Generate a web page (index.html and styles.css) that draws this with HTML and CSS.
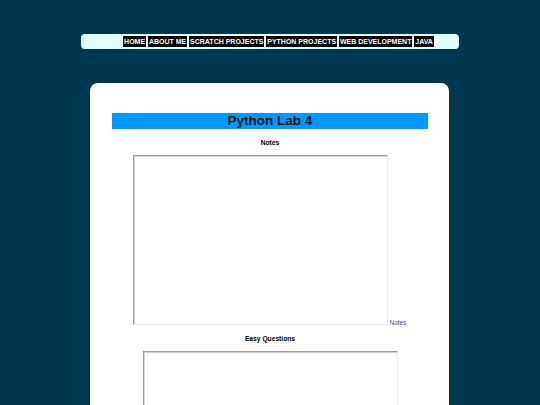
FILE: index.html
```html
<!DOCTYPE html>
<html>
<head>
<meta charset="utf-8">
<title>Python Lab 4</title>
<link rel="stylesheet" href="styles.css">
</head>
<body>
<nav class="nav">
  <ul class="nav-list">
    <li><a href="#">HOME</a></li>
    <li><a href="#">ABOUT ME</a></li>
    <li><a href="#">SCRATCH PROJECTS</a></li>
    <li><a href="#">PYTHON PROJECTS</a></li>
    <li><a href="#">WEB DEVELOPMENT</a></li>
    <li><a href="#">JAVA</a></li>
  </ul>
</nav>
<main class="card">
  <h1 class="title">Python Lab 4</h1>
  <h2 class="label">Notes</h2>
  <p class="frame-row"><span class="frame frame-notes"></span><a class="frame-link" href="#">Notes</a></p>
  <h2 class="label label-2">Easy Questions</h2>
  <p class="frame-row"><span class="frame frame-easy"></span></p>
</main>
</body>
</html>
```
FILE: styles.css
```css
html, body {
  margin: 0;
  padding: 0;
}
body {
  background: #00364f;
  font-family: "Liberation Sans", Arial, sans-serif;
  color: #000;
  padding-top: 34px;
  height: 405px;
  overflow: hidden;
}
.nav {
  width: 378px;
  margin: 0 auto;
  background: #e0ffff;
  border-radius: 4px;
  padding: 2px 0 2px 17px;
  box-sizing: border-box;
  height: 15px;
}
.nav-list {
  list-style: none;
  margin: 0;
  padding: 0;
  display: flex;
  justify-content: center;
  gap: 1.8px;
}
.nav-list a {
  display: block;
  background: #000;
  color: #fff;
  text-decoration: none;
  font-weight: bold;
  font-size: 7px;
  line-height: 11px;
  padding: 0 1px;
}
.card {
  width: 359px;
  margin: 34px 0 0 90px;
  background: #fff;
  border-radius: 8px;
  padding: 30px 21px 60px 22px;
  box-sizing: border-box;
  min-height: 400px;
}
.title {
  margin: 0;
  background: #0099ff;
  color: #111;
  font-size: 13.5px;
  line-height: 16px;
  height: 16px;
  text-align: center;
  font-weight: bold;
}
.label {
  margin: 10px 0 8px;
  font-size: 6.7px;
  line-height: 8px;
  text-align: center;
  font-weight: bold;
}
.label-2 {
  margin-top: 9px;
  margin-bottom: 8px;
}
.frame-row {
  margin: 0;
  text-align: center;
  font-size: 6.5px;
  line-height: 6px;
}
.frame {
  display: inline-block;
  box-sizing: border-box;
  width: 255px;
  height: 170px;
  border-top: 1px solid #9c9c9c;
  border-left: 1px solid #9c9c9c;
  border-right: 1px solid #ececec;
  border-bottom: 1px solid #ececec;
  box-shadow: inset 1px 1px 0 #d4d4d4;
  background: #fff;
}
.frame-notes {
  margin-left: -1px;
}
.frame-link {
  color: #3b4a8e;
  text-decoration: none;
  margin-left: 2px;
}
```
